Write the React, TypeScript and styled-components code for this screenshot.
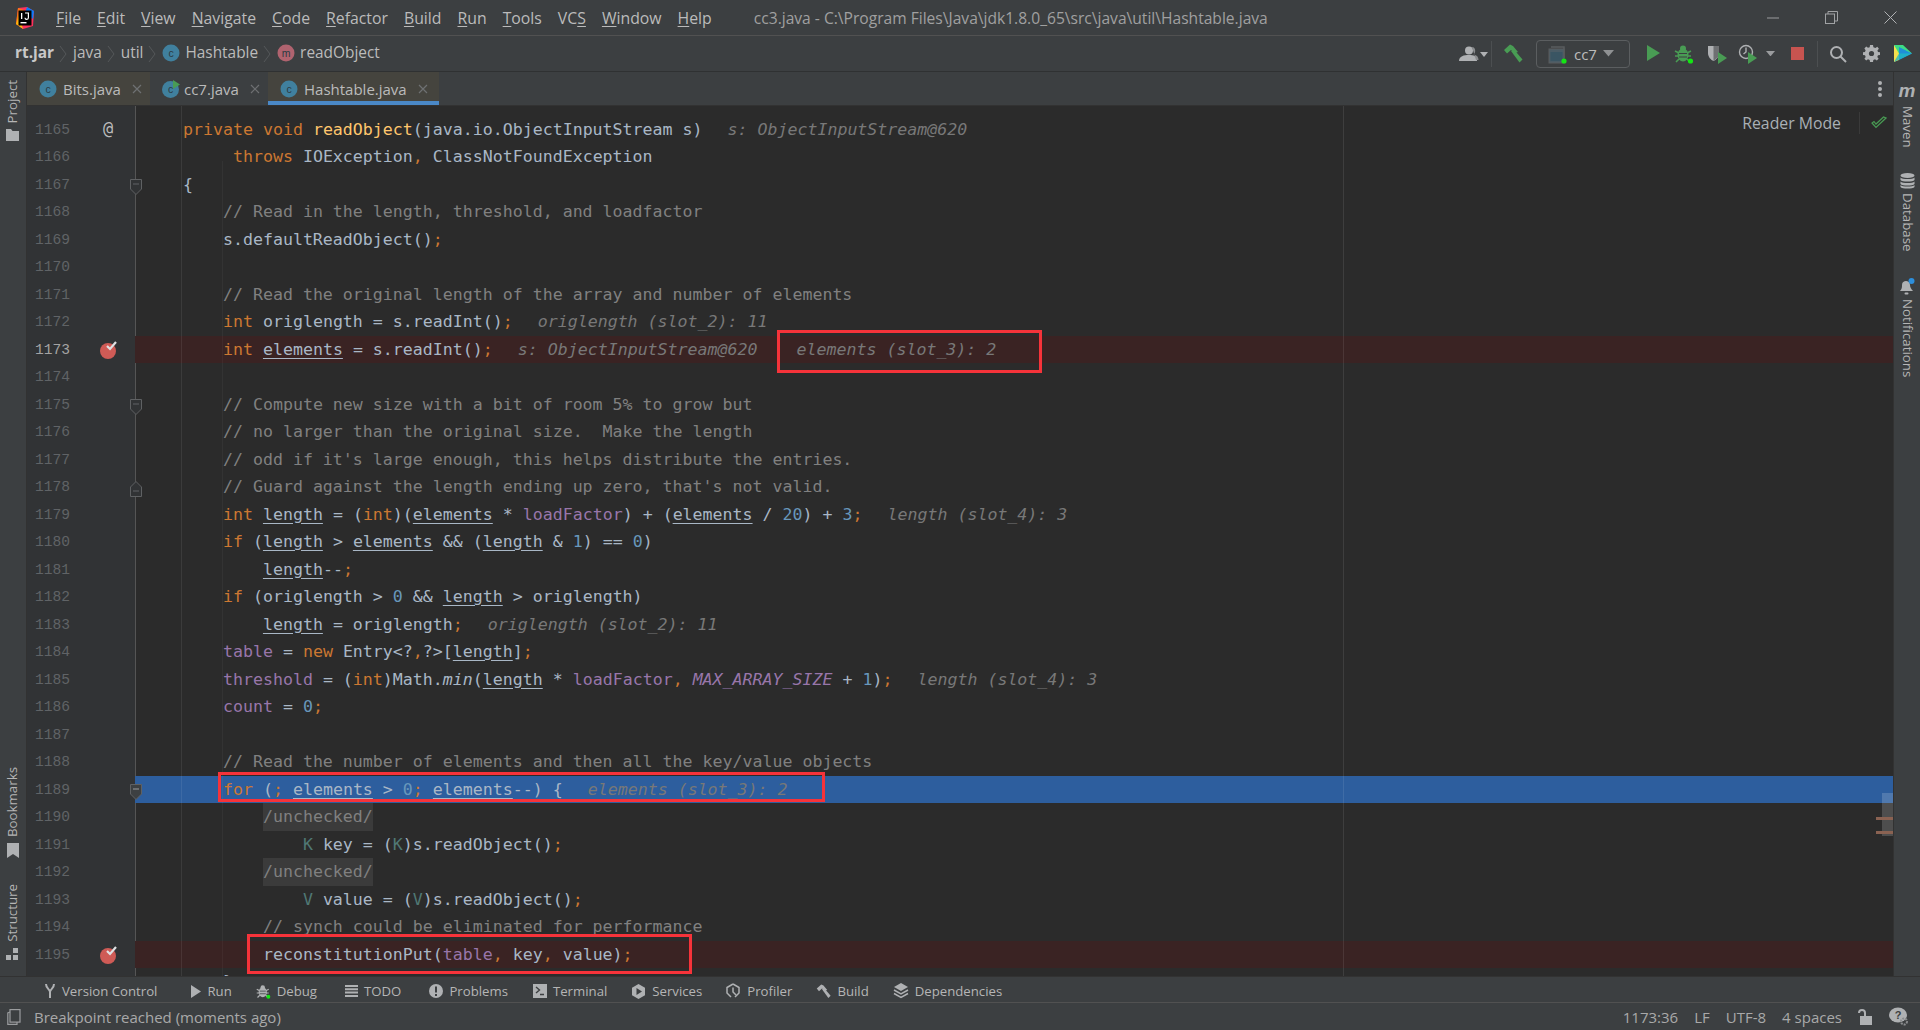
import styled, { createGlobalStyle } from "styled-components";
import { ReactNode } from "react";

const GlobalStyle = createGlobalStyle`
  html, body {
    margin: 0;
    padding: 0;
    width: 1920px;
    height: 1030px;
    overflow: hidden;
    background: #3c3f41;
  }
  * { box-sizing: border-box; }
`;

const Page = styled.div`
  width: 1920px;
  height: 1030px;
  display: flex;
  flex-direction: column;
  background: #3c3f41;
  color: #bbbbbb;
  font-family: "Open Sans", "Noto Sans", sans-serif;
  font-size: 15px;
  overflow: hidden;
`;

/* title bar */
const TitleBar = styled.div`
  height: 36px;
  flex: none;
  display: flex;
  align-items: center;
  border-bottom: 1px solid #515151;
  padding-left: 15px;
  position: relative;
`;

const Menu = styled.div`
  display: flex;
  margin-left: 21px;
  gap: 16px;
  font-size: 15.8px;
  color: #bbbbbb;
  u { text-underline-offset: 2px; }
`;

const WindowTitle = styled.div`
  margin-left: 42px;
  font-size: 15.6px;
  color: #a0a0a0;
  white-space: nowrap;
`;

const WindowButtons = styled.div`
  margin-left: auto;
  display: flex;
  align-items: center;
  gap: 46px;
  padding-right: 23px;
`;

/* navigation bar */
const NavBar = styled.div`
  height: 36px;
  flex: none;
  display: flex;
  align-items: center;
  border-bottom: 1px solid #2f3132;
  padding-left: 15px;
  font-size: 15.4px;
`;

const Crumb = styled.span<{ $bold?: boolean }>`
  font-weight: ${(p) => (p.$bold ? 700 : 400)};
  color: ${(p) => (p.$bold ? "#c8c8c8" : "#bbbbbb")};
  display: flex;
  align-items: center;
  gap: 5px;
  padding-bottom: 2px;
`;

const CrumbArrow = styled.svg`
  width: 9px;
  height: 22px;
  margin: 0 5px;
  flex: none;
`;

const RunBar = styled.div`
  margin-left: auto;
  display: flex;
  align-items: center;
  height: 100%;
`;

const Tool = styled.div<{ $w: number }>`
  width: ${(p) => p.$w}px;
  height: 28px;
  flex: none;
  display: flex;
  align-items: center;
  justify-content: center;
`;

const BarDivider = styled.div`
  width: 1px;
  height: 26px;
  background: #4c4f51;
  flex: none;
`;

const RunConfig = styled.div`
  width: 94px;
  height: 28px;
  margin: 0 8px 0 2px;
  flex: none;
  border: 1.5px solid #5b5e60;
  border-radius: 4px;
  display: flex;
  align-items: center;
  gap: 6px;
  padding-left: 11px;
  font-size: 15px;
  color: #bbbbbb;
`;

/* middle */
const Middle = styled.div`
  flex: 1;
  min-height: 0;
  display: flex;
`;

const Stripe = styled.div<{ $side: "left" | "right" }>`
  width: 27px;
  flex: none;
  display: flex;
  flex-direction: column;
  align-items: center;
  background: #3c3f41;
  font-size: 13.3px;
  color: #b5b5b5;
  ${(p) => (p.$side === "left" ? "justify-content: space-between;" : "")}
  ${(p) => (p.$side === "left" ? "border-right: 1px solid #323232;" : "border-left: 1px solid #323232;")}
`;

const StripeGroup = styled.div<{ $top?: number; $bottom?: number; $gap?: number }>`
  display: flex;
  flex-direction: column;
  align-items: center;
  gap: ${(p) => p.$gap ?? 6}px;
  padding-top: ${(p) => p.$top ?? 0}px;
  padding-bottom: ${(p) => p.$bottom ?? 0}px;
`;

const StripeLabel = styled.span<{ $flip?: boolean }>`
  writing-mode: vertical-rl;
  white-space: nowrap;
  line-height: 1;
  ${(p) => (p.$flip ? "transform: rotate(180deg);" : "")}
`;

const MavenMark = styled.span`
  font-family: "Liberation Sans", sans-serif;
  font-size: 19px;
  font-weight: 700;
  font-style: italic;
  line-height: 14px;
  color: #afb1b3;
`;

const Workspace = styled.div`
  flex: 1;
  min-width: 0;
  display: flex;
  flex-direction: column;
`;

const TabBar = styled.div`
  height: 34px;
  flex: none;
  display: flex;
  align-items: stretch;
  background: #3c3f41;
  position: relative;
  border-bottom: 1px solid #323232;
`;

const Tab = styled.div<{ $active?: boolean; $library?: boolean; $w: number }>`
  width: ${(p) => p.$w}px;
  flex: none;
  display: flex;
  align-items: center;
  gap: 6px;
  padding-left: 12px;
  font-size: 15px;
  color: #bbbbbb;
  background: ${(p) => (p.$library ? "#45443e" : "#3c3f41")};
  box-shadow: ${(p) => (p.$active ? "inset 0 -4px 0 #4a88c7" : "none")};
`;

const TabClose = styled.svg`
  width: 10px;
  height: 10px;
  margin-left: 5px;
  flex: none;
`;

const RunnableSvg = styled.svg`
  width: 18px;
  height: 18px;
  margin-right: -2px;
  flex: none;
`;

const TabMenu = styled.div`
  position: absolute;
  right: 11px;
  top: 9px;
  width: 4px;
  display: flex;
  flex-direction: column;
  gap: 2px;
  span {
    width: 4px;
    height: 4px;
    border-radius: 50%;
    background: #afb1b3;
  }
`;

const Editor = styled.div`
  flex: 1;
  min-height: 0;
  position: relative;
  overflow: hidden;
  background: #2b2b2b;
  padding-top: 9.5px;
  font-family: "DejaVu Sans Mono", "Liberation Mono", monospace;
  font-size: 16.6px;
  &::before {
    content: "";
    position: absolute;
    left: 0;
    top: 0;
    bottom: 0;
    width: 108px;
    background: #313335;
    border-right: 1px solid #555555;
  }
`;

const Row = styled.div`
  display: flex;
  height: 27.5px;
  position: relative;
  line-height: 27.5px;
`;

const LineNo = styled.div<{ $current?: boolean }>`
  width: 43px;
  flex: none;
  text-align: right;
  font-family: "Liberation Mono", monospace;
  font-size: 14.6px;
  line-height: 29px;
  color: ${(p) => (p.$current ? "#a4a3a3" : "#606366")};
`;

const GutterMark = styled.div`
  width: 65px;
  flex: none;
  position: relative;
  color: #bbbbbb;
  font-size: 17px;
`;

const AtSign = styled.span`
  position: absolute;
  left: 33px;
  top: -1px;
`;

const BreakpointIcon = styled.svg`
  position: absolute;
  left: 29px;
  top: 4px;
  width: 20px;
  height: 20px;
`;

const FoldIcon = styled.svg`
  position: absolute;
  left: 60px;
  top: 8px;
  width: 12px;
  height: 16px;
  z-index: 2;
`;

const Code = styled.div<{ $state?: "break" | "exec" }>`
  flex: 1;
  min-width: 0;
  padding-left: 48px;
  white-space: pre;
  color: #a9b7c6;
  background: ${(p) => (p.$state === "break" ? "#3a2323" : p.$state === "exec" ? "#2d5e9e" : "transparent")};
`;

const kindStyles: Record<string, string> = {
  k: "color: #cc7832;",
  c: "color: #808080;",
  f: "color: #ffc66d;",
  u: "text-decoration: underline; text-underline-offset: 3px;",
  p: "color: #9876aa;",
  P: "color: #9876aa; font-style: italic;",
  i: "font-style: italic;",
  n: "color: #6897bb;",
  t: "color: #507874;",
  h: "color: #787878; font-style: italic; margin-left: 5px;",
  H: "color: #787878; font-style: italic; margin-left: 5px; margin-right: 14px;",
  a: "color: #808080; background: #3b3b3b; display: inline-block; height: 27.5px;",
};

const Tok = styled.span<{ $kind: string }>`
  ${(p) => kindStyles[p.$kind]}
`;

const Guide = styled.div<{ $x: number; $top: number; $color: string }>`
  position: absolute;
  left: ${(p) => p.$x}px;
  top: ${(p) => p.$top}px;
  bottom: 0;
  width: 1px;
  background: ${(p) => p.$color};
  z-index: 1;
`;

const ReaderMode = styled.div`
  position: absolute;
  right: 52px;
  top: 6px;
  height: 22px;
  display: flex;
  align-items: center;
  font-family: "Open Sans", "Noto Sans", sans-serif;
  font-size: 15.8px;
  color: #a9b0b5;
`;

const ReaderDivider = styled.div`
  position: absolute;
  right: 33px;
  top: 6px;
  width: 1px;
  height: 22px;
  background: #3a3a3a;
`;

const ReaderCheck = styled.svg`
  position: absolute;
  right: 6px;
  top: 10px;
  width: 16px;
  height: 14px;
`;

const ScrollThumb = styled.div`
  position: absolute;
  right: 0;
  top: 687px;
  width: 11px;
  height: 43px;
  background: rgba(255, 255, 255, 0.17);
  z-index: 2;
`;

const ScrollMark = styled.div<{ $top: number }>`
  position: absolute;
  right: 0;
  top: ${(p) => p.$top}px;
  width: 17px;
  height: 3px;
  background: #8a6252;
  z-index: 2;
`;

const RedBox = styled.div<{ $x: number; $y: number; $w: number; $h: number }>`
  position: absolute;
  left: ${(p) => p.$x}px;
  top: ${(p) => p.$y}px;
  width: ${(p) => p.$w}px;
  height: ${(p) => p.$h}px;
  border: 3px solid #f6333a;
  pointer-events: none;
  z-index: 3;
`;

/* bottom */
const ToolWindowBar = styled.div`
  height: 27px;
  flex: none;
  display: flex;
  align-items: center;
  padding: 3px 0 0 44px;
  gap: 24px;
  font-size: 13.2px;
  color: #b5b5b5;
  border-top: 1px solid #323232;
  border-bottom: 1px solid #515151;
`;

const ToolWindowItem = styled.div<{ $extra?: number }>`
  display: flex;
  align-items: center;
  gap: 6px;
  white-space: nowrap;
  margin-left: ${(p) => p.$extra ?? 0}px;
`;

const StatusBar = styled.div`
  height: 27px;
  flex: none;
  display: flex;
  align-items: center;
  padding-left: 7px;
  font-size: 15px;
  color: #a9a9a9;
`;

const StatusText = styled.span`
  margin-left: 13px;
`;

const StatusRight = styled.div`
  margin-left: auto;
  display: flex;
  align-items: center;
  gap: 16px;
  padding-right: 11px;
`;

function parseCode(src: string): ReactNode[] {
  const out: ReactNode[] = [];
  const re = /\{([a-zA-Z])\|([^}]*)\}/g;
  let last = 0;
  let m: RegExpExecArray | null;
  while ((m = re.exec(src))) {
    if (m.index > last) out.push(src.slice(last, m.index));
    out.push(
      <Tok key={m.index} $kind={m[1]}>
        {m[2]}
      </Tok>
    );
    last = m.index + m[0].length;
  }
  if (last < src.length) out.push(src.slice(last));
  return out;
}

type LineData = { src: string; state?: "break" | "exec"; fold?: "start" | "end"; at?: boolean };

const lines: LineData[] = [
  { src: "{k|private void} {f|readObject}(java.io.ObjectInputStream s)  {h|s: ObjectInputStream@620}", at: true },
  { src: "     {k|throws} IOException{k|,} ClassNotFoundException" },
  { src: "{", fold: "start" },
  { src: "    {c|// Read in the length, threshold, and loadfactor}" },
  { src: "    s.defaultReadObject(){k|;}" },
  { src: "" },
  { src: "    {c|// Read the original length of the array and number of elements}" },
  { src: "    {k|int} origlength = s.readInt(){k|;}  {h|origlength (slot_2): 11}" },
  { src: "    {k|int} {u|elements} = s.readInt(){k|;}  {H|s: ObjectInputStream@620}  {h|elements (slot_3): 2}", state: "break" },
  { src: "" },
  { src: "    {c|// Compute new size with a bit of room 5% to grow but}", fold: "start" },
  { src: "    {c|// no larger than the original size.  Make the length}" },
  { src: "    {c|// odd if it's large enough, this helps distribute the entries.}" },
  { src: "    {c|// Guard against the length ending up zero, that's not valid.}", fold: "end" },
  { src: "    {k|int} {u|length} = ({k|int})({u|elements} * {p|loadFactor}) + ({u|elements} / {n|20}) + {n|3}{k|;}  {h|length (slot_4): 3}" },
  { src: "    {k|if} ({u|length} > {u|elements} && ({u|length} & {n|1}) == {n|0})" },
  { src: "        {u|length}--{k|;}" },
  { src: "    {k|if} (origlength > {n|0} && {u|length} > origlength)" },
  { src: "        {u|length} = origlength{k|;}  {h|origlength (slot_2): 11}" },
  { src: "    {p|table} = {k|new} Entry<?{k|,}?>[{u|length}]{k|;}" },
  { src: "    {p|threshold} = ({k|int})Math.{i|min}({u|length} * {p|loadFactor}{k|,} {P|MAX_ARRAY_SIZE} + {n|1}){k|;}  {h|length (slot_4): 3}" },
  { src: "    {p|count} = {n|0}{k|;}" },
  { src: "" },
  { src: "    {c|// Read the number of elements and then all the key/value objects}" },
  { src: "    {k|for} ({k|;} {u|elements} > {n|0}{k|;} {u|elements}--) {  {h|elements (slot_3): 2}", state: "exec", fold: "start" },
  { src: "        {a|/unchecked/}" },
  { src: "            {t|K} key = ({t|K})s.readObject(){k|;}" },
  { src: "        {a|/unchecked/}" },
  { src: "            {t|V} value = ({t|V})s.readObject(){k|;}" },
  { src: "        {c|// synch could be eliminated for performance}" },
  { src: "        reconstitutionPut({p|table}{k|,} key{k|,} value){k|;}", state: "break" },
  { src: "    }" },
];

const Icon = {
  Logo: () => (
    <svg width="20" height="22" viewBox="0 0 20 22">
      <path d="M3 1 L12 0 L19 4 L18 19 L8 22 L1 17 Z" fill="#fe315d" />
      <path d="M1 17 L3 1 L9 3 L6 20 Z" fill="#f97a12" />
      <path d="M12 0 L19 4 L18 12 L10 6 Z" fill="#087cfa" />
      <path d="M1 17 L4 8 L8 22 Z" fill="#fdb60d" />
      <rect x="3.5" y="3.5" width="13" height="15" fill="#000" />
      <rect x="5.5" y="15" width="6" height="1.4" fill="#fff" />
      <rect x="6" y="6" width="1.3" height="6" fill="#fff" />
      <path d="M10 6 h3.4 v4.6 a1.7 1.7 0 0 1 -3.4 0.2" fill="none" stroke="#fff" strokeWidth="1.2" />
    </svg>
  ),
  Minimize: () => (
    <svg width="12" height="12" viewBox="0 0 12 12">
      <path d="M0 6 H12" stroke="#9a9c9e" strokeWidth="1" />
    </svg>
  ),
  Restore: () => (
    <svg width="13" height="13" viewBox="0 0 13 13" fill="none" stroke="#a0a2a4">
      <rect x="0.5" y="3" width="9" height="9.5" />
      <path d="M3 3 V0.5 H12.5 V10 H9.5" />
    </svg>
  ),
  Close: () => (
    <svg width="13" height="13" viewBox="0 0 13 13">
      <path d="M0.5 0.5 L12.5 12.5 M12.5 0.5 L0.5 12.5" stroke="#b0b2b4" strokeWidth="1" />
    </svg>
  ),
  Arrow: () => (
    <CrumbArrow viewBox="0 0 9 22">
      <path d="M1 3 L7 11 L1 19" fill="none" stroke="#55585a" strokeWidth="1" />
    </CrumbArrow>
  ),
  Badge: ({ letter, color }: { letter: string; color: string }) => (
    <svg width="18" height="18" viewBox="0 0 18 18">
      <circle cx="9" cy="9" r="8.5" fill={color} />
      <text x="9" y="12.5" textAnchor="middle" fontSize="10.5" fontFamily="Liberation Sans" fill="#2b3a42">
        {letter}
      </text>
    </svg>
  ),
  RunnableBadge: () => (
    <RunnableSvg viewBox="0 0 18 18">
      <circle cx="8.5" cy="9.5" r="8.5" fill="#40809e" />
      <text x="8.5" y="13" textAnchor="middle" fontSize="10.5" fontFamily="Liberation Sans" fill="#2b3a42">
        c
      </text>
      <path d="M11 0 L18 4.5 L11 9 Z" fill="#499c54" />
    </RunnableSvg>
  ),
  X: () => (
    <TabClose viewBox="0 0 10 10">
      <path d="M1 1 L9 9 M9 1 L1 9" stroke="#6e7072" strokeWidth="1.2" />
    </TabClose>
  ),
  User: () => (
    <svg width="30" height="16" viewBox="0 0 30 16">
      <circle cx="11" cy="4.5" r="4" fill="#afb1b3" />
      <path d="M1 15 C1 10 6 9 11 9 C16 9 19 10 19 15 Z" fill="#afb1b3" />
      <path d="M14 1 C18 1 18 7 15.5 8.5 C19 9 20.5 11 20.5 14 H18" fill="#8a8c8e" />
      <path d="M22 6 H30 L26 11 Z" fill="#afb1b3" />
    </svg>
  ),
  Hammer: () => (
    <svg width="20" height="20" viewBox="0 0 20 20">
      <path d="M1 6 L7 0.5 L10 2 L15 8 L12 9 L8 6 L4 9.5 Z" fill="#499c54" />
      <path d="M8 7 L11 5.5 L19.5 15.5 L16.5 18.5 Z" fill="#499c54" />
    </svg>
  ),
  Config: () => (
    <svg width="20" height="20" viewBox="0 0 20 20">
      <path d="M3 3 H16 V14" fill="none" stroke="#5a5d5f" strokeWidth="1.5" />
      <rect x="1" y="5" width="15" height="14" fill="#4b5c66" stroke="#5a5d5f" />
      <rect x="2.5" y="8" width="12" height="9" fill="#3a5563" />
      <circle cx="16" cy="17" r="2.6" fill="#14e514" />
    </svg>
  ),
  Caret: ({ w = 10, color = "#9a9c9e" }: { w?: number; color?: string }) => (
    <svg width={w} height={w * 0.6} viewBox="0 0 10 6">
      <path d="M0 0 H10 L5 6 Z" fill={color} />
    </svg>
  ),
  Play: ({ size = 14, color = "#499c54" }: { size?: number; color?: string }) => (
    <svg width={size} height={size * 1.15} viewBox="0 0 14 16">
      <path d="M1 0 L14 8 L1 16 Z" fill={color} />
    </svg>
  ),
  Bug: ({ color = "#499c54", size = 20 }: { color?: string; size?: number }) => (
    <svg width={size} height={size} viewBox="0 0 20 20">
      <ellipse cx="9" cy="11" rx="5.5" ry="6.5" fill={color} />
      <circle cx="9" cy="4.5" r="3" fill={color} />
      <path d="M1 7 L5 9 M17 7 L13 9 M1 12 H5 M17 12 H13 M2 18 L5 15 M16 18 L13 15" stroke={color} strokeWidth="1.6" />
      <path d="M5 9.5 H13 M5 13 H13" stroke="#3c3f41" strokeWidth="1" />
      <circle cx="16.5" cy="17" r="2.6" fill="#14e514" />
    </svg>
  ),
  Coverage: () => (
    <svg width="20" height="20" viewBox="0 0 20 20">
      <path d="M1 2 H12 V9 C12 13 9 16 6.5 17 C4 16 1 13 1 9 Z" fill="#afb1b3" />
      <path d="M6.5 2 H12 V12 L6.5 17 Z" fill="#6e7072" />
      <path d="M11 8 L20 14 L11 20 Z" fill="#499c54" />
    </svg>
  ),
  Profile: () => (
    <svg width="20" height="20" viewBox="0 0 20 20">
      <circle cx="8" cy="8" r="6.5" fill="none" stroke="#afb1b3" strokeWidth="1.4" />
      <path d="M8 3.5 V8 L5.5 10" fill="none" stroke="#afb1b3" strokeWidth="1.4" />
      <path d="M10 8 L19 14 L10 20 Z" fill="#499c54" />
    </svg>
  ),
  Stop: () => (
    <svg width="13" height="13" viewBox="0 0 13 13">
      <rect width="13" height="13" fill="#c75450" />
    </svg>
  ),
  Search: () => (
    <svg width="18" height="18" viewBox="0 0 18 18" fill="none" stroke="#afb1b3" strokeWidth="2">
      <circle cx="7.5" cy="7.5" r="5.5" />
      <path d="M11.5 11.5 L17 17" />
    </svg>
  ),
  Gear: () => (
    <svg width="17" height="17" viewBox="0 0 17 17">
      <path
        d="M7 0 H10 L10.4 2.3 L12.4 3.1 L14.3 1.8 L15.9 3.7 L14.4 5.5 L15 7 L17 7.2 V10 L15 10.3 L14.3 12 L15.6 13.8 L13.8 15.6 L12 14.3 L10.3 15 L10 17 H7 L6.7 15 L5 14.3 L3.2 15.6 L1.4 13.8 L2.7 12 L2 10.3 L0 10 V7.2 L2 7 L2.6 5.2 L1.4 3.4 L3.2 1.6 L5 2.8 L6.7 2.2 Z"
        fill="#afb1b3"
      />
      <circle cx="8.5" cy="8.5" r="2.6" fill="#3c3f41" />
    </svg>
  ),
  Toolbox: () => (
    <svg width="19" height="19" viewBox="0 0 19 19">
      <path d="M1 1 L6 3 V16 L1 18 Z" fill="#f4e04d" />
      <path d="M1 1 L10 1 L19 9.5 L6 9.5 Z" fill="#3ddc84" />
      <path d="M6 3 L19 9.5 L6 16 Z" fill="#1f8fd8" />
      <path d="M1 18 L6 9.5 L19 9.5 Z" fill="#21b8c4" opacity="0.8" />
    </svg>
  ),
  Folder: () => (
    <svg width="13" height="12" viewBox="0 0 13 12">
      <path d="M0 0 H5 L6.5 2 H13 V12 H0 Z" fill="#afb1b3" />
    </svg>
  ),
  Bookmark: () => (
    <svg width="12" height="15" viewBox="0 0 12 15">
      <path d="M0 0 H12 V15 L6 11 L0 15 Z" fill="#afb1b3" />
    </svg>
  ),
  Structure: () => (
    <svg width="13" height="13" viewBox="0 0 13 13" fill="#afb1b3">
      <rect x="7" y="0" width="5" height="5" />
      <rect x="0" y="7" width="5" height="5" />
      <rect x="7" y="7" width="5" height="5" />
    </svg>
  ),
  Database: () => (
    <svg width="15" height="16" viewBox="0 0 15 16" fill="#afb1b3">
      <ellipse cx="7.5" cy="2.5" rx="7" ry="2.5" />
      <path d="M0.5 4.5 C2 6.5 13 6.5 14.5 4.5 V7 C13 9 2 9 0.5 7 Z" />
      <path d="M0.5 8.5 C2 10.5 13 10.5 14.5 8.5 V11 C13 13 2 13 0.5 11 Z" />
      <path d="M0.5 12 C2 14 13 14 14.5 12 V14 C13 16 2 16 0.5 14 Z" />
    </svg>
  ),
  Bell: () => (
    <svg width="16" height="18" viewBox="0 0 16 18">
      <path d="M1 13 C3 11 3 9 3 7 C3 4 5 3 7 3 C9 3 11 4 11 7 C11 9 12 11 14 13 Z" fill="#afb1b3" />
      <rect x="5.5" y="14.5" width="4" height="2" rx="1" fill="#afb1b3" />
      <circle cx="12.5" cy="3" r="3" fill="#2d8fdc" />
    </svg>
  ),
  Breakpoint: () => (
    <BreakpointIcon viewBox="0 0 20 20">
      <circle cx="9" cy="11" r="8" fill="#cf5b56" />
      <path d="M8 6 L11 9 L17 2" fill="none" stroke="#dfe1e3" strokeWidth="2.2" />
    </BreakpointIcon>
  ),
  FoldStart: ({ dark }: { dark?: boolean }) => (
    <FoldIcon viewBox="0 0 12 16">
      <path d="M0.5 0.5 H11.5 V10 L6 15.5 L0.5 10 Z" fill={dark ? "#3d4042" : "#313335"} stroke="#5f6163" />
      <path d="M3 5 H9" stroke={dark ? "#9a9c9e" : "#606366"} />
    </FoldIcon>
  ),
  FoldEnd: () => (
    <FoldIcon viewBox="0 0 12 16">
      <path d="M0.5 15.5 H11.5 V6 L6 0.5 L0.5 6 Z" fill="#313335" stroke="#5f6163" />
      <path d="M3 10 H9" stroke="#606366" />
    </FoldIcon>
  ),
  Check: () => (
    <ReaderCheck viewBox="0 0 16 14">
      <path d="M1 7 L5 11.5 L15 2 L12.5 1 L5 8 L3 5.5 Z" fill="none" stroke="#499c54" strokeWidth="1.2" />
    </ReaderCheck>
  ),
  Branch: () => (
    <svg width="12" height="16" viewBox="0 0 12 16" fill="none" stroke="#afb1b3" strokeWidth="2">
      <path d="M2 1 C2 6 6 6 6 9 V15 M10 1 C10 6 6 6 6 9" />
    </svg>
  ),
  RunTool: () => (
    <svg width="10" height="13" viewBox="0 0 10 13">
      <path d="M0 0 L10 6.5 L0 13 Z" fill="#afb1b3" />
    </svg>
  ),
  List: () => (
    <svg width="13" height="12" viewBox="0 0 13 12" fill="#afb1b3">
      <path d="M0 0 H13 V2 H0 Z M0 3.3 H13 V5.3 H0 Z M0 6.6 H13 V8.6 H0 Z M0 10 H13 V12 H0 Z" />
    </svg>
  ),
  Problems: () => (
    <svg width="14" height="14" viewBox="0 0 14 14">
      <circle cx="7" cy="7" r="7" fill="#afb1b3" />
      <path d="M7 2.5 V8.5 M7 10 V12" stroke="#3c3f41" strokeWidth="2" />
    </svg>
  ),
  Terminal: () => (
    <svg width="14" height="14" viewBox="0 0 14 14">
      <rect width="14" height="14" fill="#afb1b3" />
      <path d="M3 3 L6.5 6 L3 9 M7 10.5 H11" fill="none" stroke="#3c3f41" strokeWidth="1.4" />
    </svg>
  ),
  Services: () => (
    <svg width="15" height="15" viewBox="0 0 15 15">
      <path d="M7.5 0 L14 3.7 V11.3 L7.5 15 L1 11.3 V3.7 Z" fill="#afb1b3" />
      <path d="M5.5 4 L11 7.5 L5.5 11 Z" fill="#3c3f41" />
    </svg>
  ),
  Profiler: () => (
    <svg width="15" height="16" viewBox="0 0 15 16" fill="none" stroke="#afb1b3" strokeWidth="1.5">
      <path d="M7 1 L13 4.5 V10 L9 14 M7 1 L1 4.5 V10 L5 14" />
      <path d="M7 4.5 V9 L10 12" />
    </svg>
  ),
  Build: () => (
    <svg width="15" height="15" viewBox="0 0 20 20">
      <path d="M1 6 L7 0.5 L10 2 L15 8 L12 9 L8 6 L4 9.5 Z" fill="#afb1b3" />
      <path d="M8 7 L11 5.5 L19.5 15.5 L16.5 18.5 Z" fill="#afb1b3" />
    </svg>
  ),
  Dependencies: () => (
    <svg width="16" height="16" viewBox="0 0 16 16">
      <path d="M8 0 L15 4 L8 8 L1 4 Z" fill="#afb1b3" />
      <path d="M1 7 L8 11 L15 7 M1 10.5 L8 14.5 L15 10.5" fill="none" stroke="#afb1b3" strokeWidth="1.5" />
    </svg>
  ),
  Book: () => (
    <svg width="14" height="16" viewBox="0 0 14 16" fill="none" stroke="#9a9c9e" strokeWidth="1.2">
      <rect x="3" y="0.6" width="10" height="12.5" />
      <path d="M3 3 L0.8 4 V15.4 H10 V13" />
    </svg>
  ),
  Lock: () => (
    <svg width="15" height="16" viewBox="0 0 15 16">
      <rect x="2" y="7" width="12" height="9" fill="#afb1b3" />
      <path d="M1 4 C1 0 7 0 7 4 V7" fill="none" stroke="#afb1b3" strokeWidth="2" />
    </svg>
  ),
  Help: () => (
    <svg width="20" height="19" viewBox="0 0 20 19">
      <ellipse cx="9" cy="8" rx="9" ry="7.5" fill="#afb1b3" />
      <text x="9" y="12" textAnchor="middle" fontSize="11" fontWeight="700" fontFamily="Liberation Sans" fill="#3c3f41">
        ?
      </text>
      <circle cx="15" cy="14.5" r="3" fill="none" stroke="#8a8c8e" strokeWidth="2" strokeDasharray="2 1" />
    </svg>
  ),
};

const menuItems: [string, string][] = [
  ["F", "ile"],
  ["E", "dit"],
  ["V", "iew"],
  ["N", "avigate"],
  ["C", "ode"],
  ["R", "efactor"],
  ["B", "uild"],
  ["R", "un"],
  ["T", "ools"],
  ["VC", "S"],
  ["W", "indow"],
  ["H", "elp"],
];

const bottomTools: [ReactNode, string, number?][] = [
  [<Icon.Branch />, "Version Control"],
  [<Icon.RunTool />, "Run", 10],
  [<Icon.Bug color="#afb1b3" size={15} />, "Debug"],
  [<Icon.List />, "TODO", 4],
  [<Icon.Problems />, "Problems", 4],
  [<Icon.Terminal />, "Terminal", 1],
  [<Icon.Services />, "Services"],
  [<Icon.Profiler />, "Profiler"],
  [<Icon.Build />, "Build"],
  [<Icon.Dependencies />, "Dependencies"],
];

export default function App() {
  return (
    <Page>
      <GlobalStyle />
      <TitleBar>
        <Icon.Logo />
        <Menu>
          {menuItems.map(([a, b], i) =>
            a === "VC" ? (
              <span key={i}>
                VC<u>S</u>
              </span>
            ) : (
              <span key={i}>
                <u>{a}</u>
                {b}
              </span>
            )
          )}
        </Menu>
        <WindowTitle>cc3.java - C:\Program Files\Java\jdk1.8.0_65\src\java\util\Hashtable.java</WindowTitle>
        <WindowButtons>
          <Icon.Minimize />
          <Icon.Restore />
          <Icon.Close />
        </WindowButtons>
      </TitleBar>

      <NavBar>
        <Crumb $bold>rt.jar</Crumb>
        <Icon.Arrow />
        <Crumb>java</Crumb>
        <Icon.Arrow />
        <Crumb>util</Crumb>
        <Icon.Arrow />
        <Crumb>
          <Icon.Badge letter="c" color="#40809e" />
          Hashtable
        </Crumb>
        <Icon.Arrow />
        <Crumb>
          <Icon.Badge letter="m" color="#b0636f" />
          readObject
        </Crumb>
        <RunBar>
          <Tool $w={36}>
            <Icon.User />
          </Tool>
          <BarDivider />
          <Tool $w={42}>
            <Icon.Hammer />
          </Tool>
          <RunConfig>
            <Icon.Config />
            cc7
            <Icon.Caret w={11} color="#8f9193" />
          </RunConfig>
          <Tool $w={30}>
            <Icon.Play />
          </Tool>
          <Tool $w={32}>
            <Icon.Bug />
          </Tool>
          <Tool $w={33}>
            <Icon.Coverage />
          </Tool>
          <Tool $w={30}>
            <Icon.Profile />
          </Tool>
          <Tool $w={15}>
            <Icon.Caret w={9} />
          </Tool>
          <Tool $w={39}>
            <Icon.Stop />
          </Tool>
          <BarDivider />
          <Tool $w={40}>
            <Icon.Search />
          </Tool>
          <Tool $w={26}>
            <Icon.Gear />
          </Tool>
          <Tool $w={36}>
            <Icon.Toolbox />
          </Tool>
        </RunBar>
      </NavBar>

      <Middle>
        <Stripe $side="left">
          <StripeGroup $top={8}>
            <StripeLabel $flip>Project</StripeLabel>
            <Icon.Folder />
          </StripeGroup>
          <StripeGroup $bottom={15} $gap={26}>
            <StripeGroup>
              <StripeLabel $flip>Bookmarks</StripeLabel>
              <Icon.Bookmark />
            </StripeGroup>
            <StripeGroup>
              <StripeLabel $flip>Structure</StripeLabel>
              <Icon.Structure />
            </StripeGroup>
          </StripeGroup>
        </Stripe>

        <Workspace>
          <TabBar>
            <Tab $library $w={123}>
              <Icon.Badge letter="c" color="#40809e" />
              Bits.java
              <Icon.X />
            </Tab>
            <Tab $w={118}>
              <Icon.RunnableBadge />
              cc7.java
              <Icon.X />
            </Tab>
            <Tab $active $library $w={171}>
              <Icon.Badge letter="c" color="#40809e" />
              Hashtable.java
              <Icon.X />
            </Tab>
            <TabMenu>
              <span />
              <span />
              <span />
            </TabMenu>
          </TabBar>

          <Editor>
            {lines.map((line, i) => {
              const no = 1165 + i;
              return (
                <Row key={no}>
                  <LineNo $current={no === 1173}>{no < 1196 ? no : ""}</LineNo>
                  <GutterMark>
                    {line.at && <AtSign>@</AtSign>}
                    {line.state === "break" && <Icon.Breakpoint />}
                    {line.fold === "start" && <Icon.FoldStart dark={line.state === "exec"} />}
                    {line.fold === "end" && <Icon.FoldEnd />}
                  </GutterMark>
                  <Code $state={line.state}>{parseCode(line.src)}</Code>
                </Row>
              );
            })}
            <Guide $x={154} $top={0} $color="rgba(255, 255, 255, 0.08)" />
            <Guide $x={195} $top={55} $color="rgba(255, 255, 255, 0.04)" />
            <Guide $x={1316} $top={0} $color="rgba(255, 255, 255, 0.09)" />
            <ReaderMode>Reader Mode</ReaderMode>
            <ReaderDivider />
            <Icon.Check />
            <ScrollThumb />
            <ScrollMark $top={711} />
            <ScrollMark $top={725} />
            <RedBox $x={750} $y={224} $w={265} $h={43} />
            <RedBox $x={191} $y={666} $w={607} $h={30} />
            <RedBox $x={220} $y={828} $w={445} $h={40} />
          </Editor>
        </Workspace>

        <Stripe $side="right">
          <StripeGroup $top={12} $gap={8}>
            <MavenMark>m</MavenMark>
            <StripeLabel>Maven</StripeLabel>
          </StripeGroup>
          <StripeGroup $top={25} $gap={4}>
            <Icon.Database />
            <StripeLabel>Database</StripeLabel>
          </StripeGroup>
          <StripeGroup $top={27} $gap={3}>
            <Icon.Bell />
            <StripeLabel>Notifications</StripeLabel>
          </StripeGroup>
        </Stripe>
      </Middle>

      <ToolWindowBar>
        {bottomTools.map(([icon, label, extra]) => (
          <ToolWindowItem key={label} $extra={extra}>
            {icon}
            {label}
          </ToolWindowItem>
        ))}
      </ToolWindowBar>

      <StatusBar>
        <Icon.Book />
        <StatusText>Breakpoint reached (moments ago)</StatusText>
        <StatusRight>
          <span>1173:36</span>
          <span>LF</span>
          <span>UTF-8</span>
          <span>4 spaces</span>
          <Icon.Lock />
          <Icon.Help />
        </StatusRight>
      </StatusBar>
    </Page>
  );
}
